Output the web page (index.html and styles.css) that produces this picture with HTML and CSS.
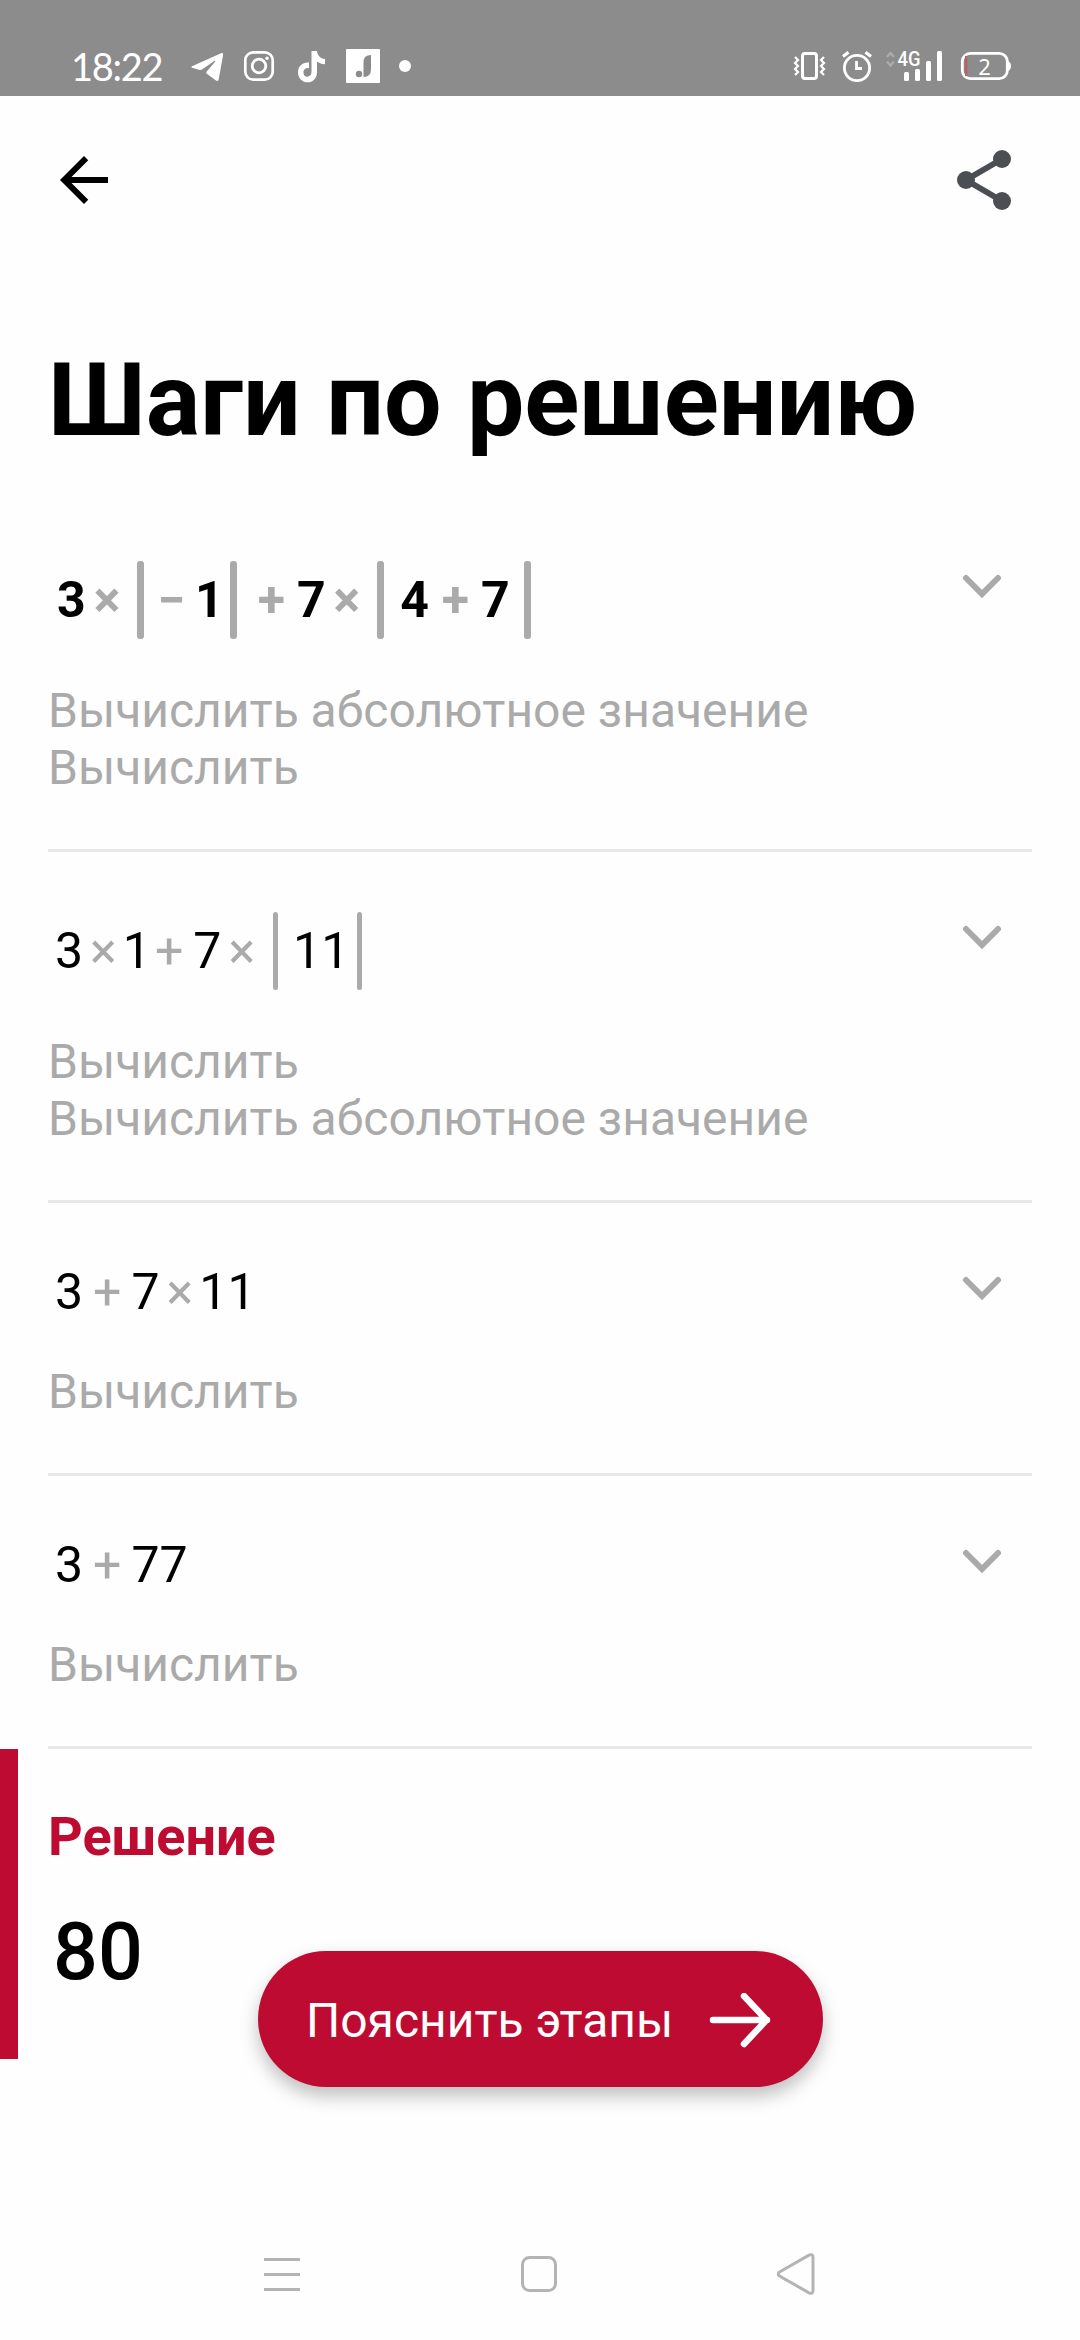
FILE: index.html
```html
<!DOCTYPE html>
<html lang="ru">
<head>
  <meta charset="UTF-8">
  <meta name="viewport" content="width=device-width, initial-scale=1.0">
  <title>Шаги по решению</title>
  <link rel="stylesheet" href="styles.css">
</head>
<body>

<div class="screen">

  <!-- Статус-бар -->
  <div class="status-bar">
    <span class="clock">18:22</span>
    <svg class="status-left" width="230" height="36" viewBox="186 48 230 36" fill="#fff">
      <path d="M192 66.3L221 53.2Q223.6 52.3 223.1 55L218.8 79Q218.2 82 215.6 80.2L206.5 73.6Q205.6 72.8 206.5 71.8L215.3 61.4Q215.4 60.5 214.3 61L202 69.6Q200.6 70.2 199 69.7L192 67.7Q190.5 67 192 66.3Z"/>
      <g fill="none" stroke="#fff">
        <rect x="245.3" y="52.3" width="27.4" height="27.4" rx="8" stroke-width="2.7"/>
        <circle cx="259" cy="66" r="6.8" stroke-width="2.8"/>
      </g>
      <circle cx="267" cy="58.3" r="1.8"/>
      <path d="M311.5 51H317C317.3 55.4 320.5 58.6 325 59V64.2C321.8 64.2 319.2 63.2 317 61.6V72C317 86.2 298 85.3 298 72.3C298 66 303 62 309 62.6V68.2C306.2 67.5 303.4 69.3 303.4 72.2C303.4 78.4 311.5 78.2 311.5 71.8Z"/>
      <rect x="346" y="49" width="34" height="34" rx="1"/>
      <path d="M371 55V69Q371 77 363.5 77V62Q363.5 55 371 55Z" fill="#8c8c8c"/>
      <circle cx="359" cy="74" r="3.2" fill="#8c8c8c"/>
      <circle cx="405" cy="66" r="6"/>
    </svg>
    <svg class="status-right" width="222" height="36" viewBox="792 48 222 36" fill="none" stroke="#fff">
      <rect x="802.5" y="53.5" width="14" height="25" rx="2.5" stroke-width="3"/>
      <path d="M795 57l3 3-3 3 3 3-3 3 3 3-3 3M824 57l-3 3 3 3-3 3 3 3-3 3 3 3" stroke-width="2.2"/>
      <circle cx="857" cy="68" r="12.6" stroke-width="2.8"/>
      <path d="M856.5 61v7.5h5.5" stroke-width="2.8"/>
      <path d="M843 56.5l5.5-4.2M871 56.5l-5.5-4.2" stroke-width="3.2"/>
      <path d="M887 57l3.500-4 3.500 4M887 61.500l3.500 4 3.500-4" stroke="#adadad" stroke-width="2.2"/>
      <g fill="#fff" stroke="none">
        <rect x="904" y="72" width="5" height="9" rx="1.5"/>
        <rect x="915" y="69" width="5" height="12" rx="1.5"/>
        <rect x="926" y="61" width="5" height="20" rx="1.5"/>
        <rect x="937" y="51" width="5" height="30" rx="1.5"/>
        <path d="M1008 61q3 1.5 3 5t-3 5z"/>
        <text class="net-label" x="897.5" y="65.5" textLength="23" lengthAdjust="spacingAndGlyphs">4G</text>
        <text class="battery-label" x="984.5" y="74.5" text-anchor="middle">2</text>
      </g>
      <rect x="962.3" y="53.3" width="45" height="25.4" rx="8" stroke-width="2.8"/>
      <path d="M966.2 56v20" stroke="#b9606a" stroke-width="2.4"/>
    </svg>
  </div>

  <!-- Верхняя панель -->
  <div class="toolbar">
    <svg width="72" height="72" viewBox="0 0 24 24">
      <path d="M20 11H7.83l5.59-5.59L12 4l-8 8 8 8 1.41-1.41L7.83 13H20v-2z"/>
    </svg>
    <svg width="72" height="72" viewBox="0 0 24 24" fill="#4b4f54" stroke="#4b4f54">
      <path d="M18 5L6 12l12 7" fill="none" stroke-width="2"/>
      <g stroke="none">
        <circle cx="18" cy="5" r="3"/>
        <circle cx="6" cy="12" r="3"/>
        <circle cx="18" cy="19" r="3"/>
      </g>
    </svg>
  </div>

  <h1>Шаги по решению</h1>

  <!-- Шаги -->
  <div class="steps">
    <div class="step step-tall">
      <div class="step-body">
        <div class="expr expr-active">
          <span>3</span><span class="op mul">×</span><span class="bar"></span><span class="op neg">−</span><span>1</span><span class="bar bar-close"></span><span class="op plus plus-after-bar">+</span><span>7</span><span class="op mul">×</span><span class="bar"></span><span>4</span><span class="op plus">+</span><span>7</span><span class="bar bar-close bar-last"></span>
        </div>
        <p>Вычислить абсолютное значение<br>Вычислить</p>
      </div>
      <svg class="chevron" width="40" height="26" viewBox="0 0 40 26"><path d="M4 5l16 16L36 5"/></svg>
    </div>

    <div class="step step-tall">
      <div class="step-body">
        <div class="expr">
          <span>3</span><span class="op mul">×</span><span>1</span><span class="op plus plus-tight">+</span><span>7</span><span class="op mul">×</span><span class="bar"></span><span>11</span><span class="bar bar-close"></span>
        </div>
        <p>Вычислить<br>Вычислить абсолютное значение</p>
      </div>
      <svg class="chevron" width="40" height="26" viewBox="0 0 40 26"><path d="M4 5l16 16L36 5"/></svg>
    </div>

    <div class="step">
      <div class="step-body">
        <div class="expr">
          <span>3</span><span class="op plus">+</span><span>7</span><span class="op mul">×</span><span>11</span>
        </div>
        <p>Вычислить</p>
      </div>
      <svg class="chevron" width="40" height="26" viewBox="0 0 40 26"><path d="M4 5l16 16L36 5"/></svg>
    </div>

    <div class="step">
      <div class="step-body">
        <div class="expr">
          <span>3</span><span class="op plus">+</span><span>77</span>
        </div>
        <p>Вычислить</p>
      </div>
      <svg class="chevron" width="40" height="26" viewBox="0 0 40 26"><path d="M4 5l16 16L36 5"/></svg>
    </div>
  </div>

  <!-- Ответ -->
  <div class="solution">
    <h2>Решение</h2>
    <div class="answer">80</div>
  </div>

  <button class="explain">
    <span>Пояснить этапы</span>
    <svg width="62" height="56" viewBox="0 0 62 56"><path d="M4 27h54M35 3l22.5 24L35 51"/></svg>
  </button>

  <!-- Системная навигация -->
  <div class="nav-bar">
    <svg width="40" height="44" viewBox="0 0 40 44"><path d="M2 7.5h36M2 22.5h36M2 37.5h36"/></svg>
    <svg width="40" height="44" viewBox="0 0 40 44"><rect x="3.5" y="5.5" width="33" height="33" rx="7"/></svg>
    <svg width="40" height="44" viewBox="0 0 40 44"><path d="M3.5 20L33 3.2Q37 1.5 37 5.5V38.5Q37 42.5 33 40.8L3.5 24Q1 22 3.5 20Z"/></svg>
  </div>

</div>

</body>
</html>
```

FILE: styles.css
```css
/* =====================
   Цвета
   ===================== */
:root {
  --color-bg: #fefefe;
  --color-status: #8c8c8c;
  --color-accent: #be0b31;
  --color-muted: #aaaaaa;
  --color-line: #e8e8e8;
}

* {
  box-sizing: border-box;
}

body {
  margin: 0;
  font-family: Roboto, "Noto Sans", sans-serif;
  background: var(--color-bg);
  color: #000;
}

svg {
  display: block;
}

h1,
h2,
p {
  margin: 0;
}

.screen {
  position: relative;
  display: flex;
  flex-direction: column;
  height: 2340px;
  overflow: hidden;
}

/* =====================
   Статус-бар
   ===================== */
.status-bar {
  display: flex;
  align-items: flex-start;
  height: 96px;
  padding: 48px 66px 0 71px;
  background: var(--color-status);
}

.clock {
  width: 115px;
  font-family: Lato, sans-serif;
  font-size: 38px;
  line-height: 36px;
  letter-spacing: -1.3px;
  color: #fff;
}

.status-right {
  margin-left: auto;
}

.net-label {
  font-size: 20px;
  font-weight: 500;
}

.battery-label {
  font-family: "Noto Sans", sans-serif;
  font-size: 22px;
}

/* =====================
   Верхняя панель и заголовок
   ===================== */
.toolbar {
  display: flex;
  justify-content: space-between;
  padding: 48px 60px 0 48px;
}

h1 {
  margin-top: 124px;
  padding-left: 48px;
  font-size: 102px;
  font-weight: 700;
  line-height: 120px;
  white-space: nowrap;
}

/* =====================
   Шаги
   ===================== */
.steps {
  margin: 41px 48px 0;
}

.step {
  display: flex;
  justify-content: space-between;
  height: 273px;
  padding-top: 56px;
  border-bottom: 3px solid var(--color-line);
}

.step-tall {
  height: 351px;
  padding-top: 60px;
}

.expr {
  display: flex;
  align-items: center;
  height: 66px;
  padding-left: 7px;
  font-size: 50px;
  line-height: 66px;
}

.step-tall .expr {
  height: 78px;
}

.op {
  color: var(--color-muted);
}

.mul {
  margin: 0 6px 0 7px;
}

.plus {
  margin: 0 10px;
}

.plus-tight {
  margin-left: 4px;
}

/* Знак модуля */
.bar {
  width: 5px;
  height: 78px;
  margin: 0 15px 0 12px;
  border-radius: 3px;
  background: var(--color-muted);
}

.bar-close {
  margin: 0 0 0 8px;
}

/* Первый шаг: жирный шрифт, отступы шире */
.expr-active {
  padding-left: 9px;
  font-weight: 700;
}

.expr-active .mul {
  margin: 0 5px 0 8px;
}

.expr-active .plus {
  margin: 0 12px 0 13px;
}

.expr-active .plus-after-bar {
  margin-left: 21px;
}

.expr-active .neg {
  margin: 0 10px 0 -3px;
}

.expr-active .bar {
  width: 7px;
  margin-right: 16px;
}

.expr-active .bar-close {
  margin: 0 0 0 6px;
}

.expr-active .bar-last {
  margin-left: 14px;
}

.step p {
  margin-top: 38px;
  font-size: 48px;
  line-height: 57px;
  color: var(--color-muted);
  white-space: nowrap;
}

.step-tall p {
  margin-top: 43px;
}

.chevron {
  margin: 16px 30px 0 0;
  fill: none;
  stroke: var(--color-muted);
  stroke-width: 6;
  stroke-linecap: round;
}

.step-tall .chevron {
  margin-top: 12px;
}

/* =====================
   Ответ
   ===================== */
.solution {
  height: 310px;
  padding: 56px 0 0 30px;
  border-left: 18px solid var(--color-accent);
}

.solution h2 {
  font-size: 54px;
  font-weight: 700;
  line-height: 64px;
  color: var(--color-accent);
}

.answer {
  margin-top: 36px;
  padding-left: 5px;
  font-size: 79px;
  font-weight: 500;
  line-height: 94px;
}

/* Кнопка поверх списка */
.explain {
  position: absolute;
  left: 258px;
  top: 1951px;
  display: flex;
  align-items: center;
  justify-content: space-between;
  width: 565px;
  height: 136px;
  padding: 4px 52px 0 48px;
  border: none;
  border-radius: 68px;
  background: var(--color-accent);
  box-shadow: 0 9px 18px rgba(0, 0, 0, 0.25);
  font: 400 48px/60px Roboto, sans-serif;
  color: #fff;
}

.explain svg {
  fill: none;
  stroke: #fff;
  stroke-width: 6.5;
  stroke-linecap: round;
  stroke-linejoin: round;
}

/* =====================
   Системная навигация
   ===================== */
.nav-bar {
  display: flex;
  justify-content: space-between;
  margin-top: auto;
  padding: 0 264px 44px 262px;
}

.nav-bar svg {
  fill: none;
  stroke: #b4b4b4;
  stroke-width: 3;
}
```
